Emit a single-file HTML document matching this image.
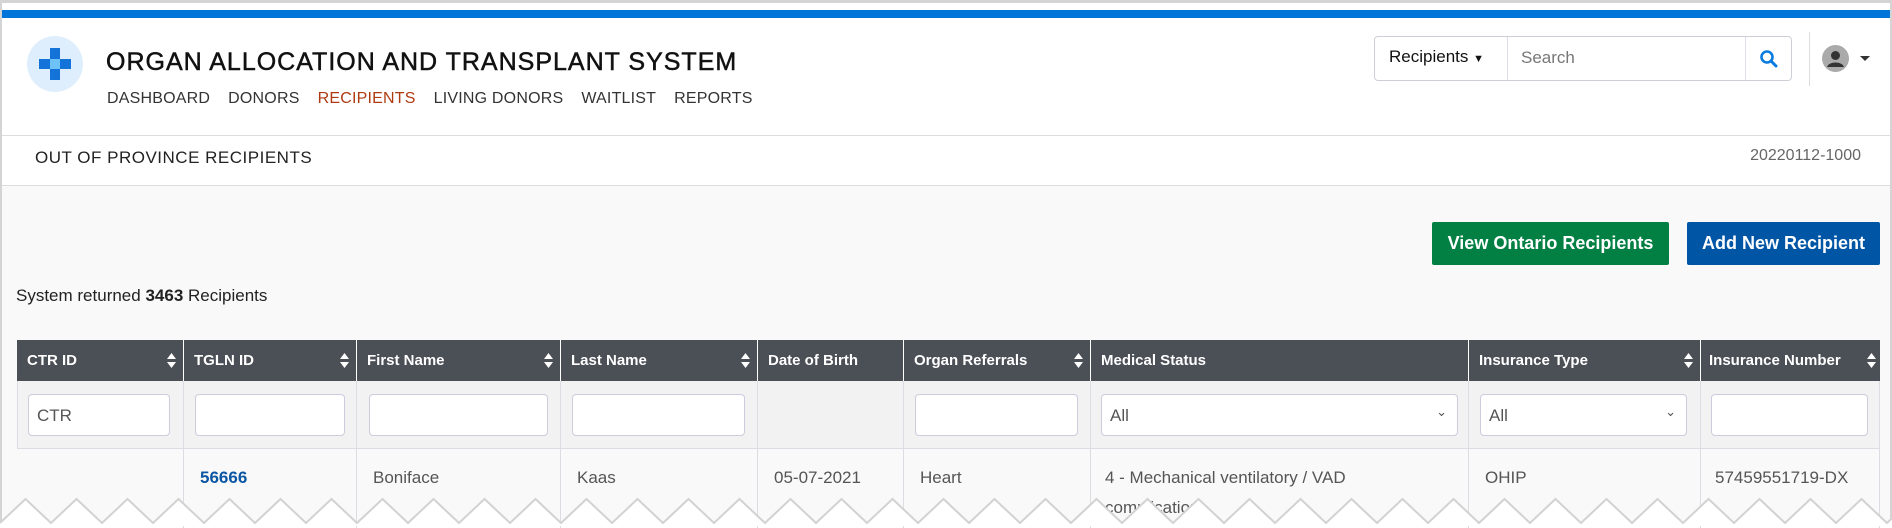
<!DOCTYPE html>
<html><head><meta charset="utf-8"><style>
*{box-sizing:border-box;margin:0;padding:0}
body{width:1892px;height:526px;overflow:hidden;background:#fff;font-family:"Liberation Sans",sans-serif;position:relative}
.a{position:absolute}
.frame{left:0;top:0;width:1892px;height:526px;border:2px solid #d4d4d4;border-top-width:3px;border-bottom:0}
.nav span{margin-right:18px}
.inp{position:absolute;top:394px;height:42px;background:#fff;border:1px solid #ccd;border-radius:4px;font-size:17px;color:#555;padding:11px 8px}
.hd{position:absolute;top:340px;height:41px;color:#fff;font-weight:bold;font-size:15px;line-height:41px;padding-left:10px;border-left:1px solid #fff}
.sort{position:absolute;right:7px;top:13px;width:9px;height:15px}
.cell{position:absolute;top:448px;height:80px;border-left:1px solid #dcdde3;font-size:17px;color:#555;padding:15px 0 0 16px;line-height:30px}
.fc{position:absolute;top:381px;height:67px;border-left:1px solid #dcdde3;background:#f2f2f2}
</style></head><body>
<div class="a" style="left:0;top:0;width:1892px;height:185px;background:#fff"></div>
<div class="a" style="left:0;top:185px;width:1892px;height:341px;background:#f9f9f9"></div>
<div class="a" style="left:0;top:10px;width:1892px;height:8px;background:#0075d9"></div>
<div class="a" style="left:27px;top:36px;width:56px;height:56px;border-radius:50%;background:#dfeefc"></div>
<svg class="a" style="left:36px;top:45px" width="38" height="38" viewBox="0 0 38 38"><rect x="14" y="3" width="10" height="32" fill="#1373d8"/><rect x="3" y="14" width="32" height="10" fill="#1373d8"/><rect x="14" y="14" width="10" height="10" fill="#6dc3f7"/></svg>
<div class="a" style="left:106px;top:48px;font-size:25px;letter-spacing:1px;color:#111;-webkit-text-stroke:0.5px #111">ORGAN ALLOCATION AND TRANSPLANT SYSTEM</div>
<div class="a nav" style="left:107px;top:90px;font-size:16px;color:#333;letter-spacing:0.2px;white-space:nowrap"><span>DASHBOARD</span><span>DONORS</span><span style="color:#b03a10">RECIPIENTS</span><span>LIVING DONORS</span><span>WAITLIST</span><span>REPORTS</span></div>
<div class="a" style="left:1374px;top:36px;width:418px;height:45px;border:1px solid #ccd0d6;border-radius:4px;background:#fff"></div>
<div class="a" style="left:1507px;top:37px;width:1px;height:43px;background:#dde"></div>
<div class="a" style="left:1745px;top:37px;width:1px;height:43px;background:#dde"></div>
<div class="a" style="left:1389px;top:47px;font-size:17px;color:#111">Recipients <span style="font-size:11px">▼</span></div>
<div class="a" style="left:1521px;top:48px;font-size:17px;color:#777">Search</div>
<svg class="a" style="left:1759px;top:49px" width="20" height="20" viewBox="0 0 20 20"><circle cx="8" cy="8" r="5.5" fill="none" stroke="#0a7be0" stroke-width="2.6"/><line x1="12" y1="12" x2="17" y2="17" stroke="#0a7be0" stroke-width="3" stroke-linecap="round"/></svg>
<div class="a" style="left:1809px;top:32px;width:1px;height:54px;background:#ddd"></div>
<svg class="a" style="left:1822px;top:45px" width="27" height="27" viewBox="0 0 27 27"><circle cx="13.5" cy="13.5" r="13.5" fill="#aaa"/><circle cx="13.5" cy="10.5" r="4.5" fill="#333"/><path d="M5 22c2-6 15-6 17 0z" fill="#333"/></svg>
<div class="a" style="left:1860px;top:56px;width:0;height:0;border-left:5px solid transparent;border-right:5px solid transparent;border-top:5px solid #333"></div>
<div class="a" style="left:0;top:135px;width:1892px;height:1px;background:#ddd"></div>
<div class="a" style="left:0;top:185px;width:1892px;height:1px;background:#ddd"></div>
<div class="a" style="left:35px;top:148px;font-size:17px;color:#222;letter-spacing:0.5px">OUT OF PROVINCE RECIPIENTS</div>
<div class="a" style="right:31px;top:147px;font-size:16px;color:#666">20220112-1000</div>
<div class="a" style="left:1432px;top:222px;width:237px;height:43px;background:#028043;border-radius:2px;color:#fff;font-size:18px;font-weight:bold;line-height:43px;text-align:center">View Ontario Recipients</div>
<div class="a" style="left:1687px;top:222px;width:193px;height:43px;background:#0055a5;border-radius:2px;color:#fff;font-size:18px;font-weight:bold;line-height:43px;text-align:center">Add New Recipient</div>
<div class="a" style="left:16px;top:286px;font-size:17px;color:#222">System returned <b>3463</b> Recipients</div>
<div class="a" style="left:17px;top:340px;width:1863px;height:41px;background:#4b4f56"></div>
<div class="hd" style="left:17px;width:166px;border-left:0">CTR ID<svg class="sort" viewBox="0 0 9 15"><path d="M0 6L4.5 0L9 6zM0 9L4.5 15L9 9z" fill="#fff"/></svg></div>
<div class="hd" style="left:183px;width:173px">TGLN ID<svg class="sort" viewBox="0 0 9 15"><path d="M0 6L4.5 0L9 6zM0 9L4.5 15L9 9z" fill="#fff"/></svg></div>
<div class="hd" style="left:356px;width:204px">First Name<svg class="sort" viewBox="0 0 9 15"><path d="M0 6L4.5 0L9 6zM0 9L4.5 15L9 9z" fill="#fff"/></svg></div>
<div class="hd" style="left:560px;width:197px">Last Name<svg class="sort" viewBox="0 0 9 15"><path d="M0 6L4.5 0L9 6zM0 9L4.5 15L9 9z" fill="#fff"/></svg></div>
<div class="hd" style="left:757px;width:146px">Date of Birth</div>
<div class="hd" style="left:903px;width:187px">Organ Referrals<svg class="sort" viewBox="0 0 9 15"><path d="M0 6L4.5 0L9 6zM0 9L4.5 15L9 9z" fill="#fff"/></svg></div>
<div class="hd" style="left:1090px;width:378px">Medical Status</div>
<div class="hd" style="left:1468px;width:232px">Insurance Type<svg class="sort" viewBox="0 0 9 15"><path d="M0 6L4.5 0L9 6zM0 9L4.5 15L9 9z" fill="#fff"/></svg></div>
<div class="hd" style="left:1700px;width:180px;padding-left:8px">Insurance Number<svg class="sort" style="right:4px" viewBox="0 0 9 15"><path d="M0 6L4.5 0L9 6zM0 9L4.5 15L9 9z" fill="#fff"/></svg></div>
<div class="fc" style="left:17px;width:166px"></div><div class="fc" style="left:183px;width:173px"></div><div class="fc" style="left:356px;width:204px"></div><div class="fc" style="left:560px;width:197px"></div><div class="fc" style="left:757px;width:146px"></div><div class="fc" style="left:903px;width:187px"></div><div class="fc" style="left:1090px;width:378px"></div><div class="fc" style="left:1468px;width:232px"></div><div class="fc" style="left:1700px;width:180px;border-right:1px solid #dcdde3"></div>
<div class="a" style="left:17px;top:448px;width:1863px;height:1px;background:#dcdde3"></div>
<div class="inp" style="left:28px;width:142px">CTR</div>
<div class="inp" style="left:195px;width:150px"></div>
<div class="inp" style="left:369px;width:179px"></div>
<div class="inp" style="left:572px;width:173px"></div>
<div class="inp" style="left:915px;width:163px"></div>
<div class="inp" style="left:1101px;width:357px">All<span style="position:absolute;right:10px;top:9px;font-size:13px">⌄</span></div>
<div class="inp" style="left:1480px;width:207px">All<span style="position:absolute;right:10px;top:9px;font-size:13px">⌄</span></div>
<div class="inp" style="left:1711px;width:157px"></div>
<div class="cell" style="left:17px;width:166px;border-left:0"></div>
<div class="cell" style="left:183px;width:173px;color:#0b56a3;font-weight:bold">56666</div>
<div class="cell" style="left:356px;width:204px">Boniface</div>
<div class="cell" style="left:560px;width:197px">Kaas</div>
<div class="cell" style="left:757px;width:146px">05-07-2021</div>
<div class="cell" style="left:903px;width:187px">Heart</div>
<div class="cell" style="left:1090px;width:378px;padding-left:14px">4 - Mechanical ventilatory / VAD<br>complication</div>
<div class="cell" style="left:1468px;width:232px">OHIP</div>
<div class="cell" style="left:1700px;width:180px;border-right:1px solid #dcdde3;padding-left:14px">57459551719-DX</div>
<div class="a frame"></div>
<svg class="a" style="left:0;top:495px" width="1892" height="31" viewBox="0 0 1892 31">
<path id="zf" d="" fill="#fff"/>
<path id="zs" d="" fill="none" stroke="#d2d2d2" stroke-width="2"/>
<script>
var d="M0 28";for(var x=0;x<1900;x+=51){d+=" L"+(x+25.5)+" 4 L"+(x+51)+" 28";}
document.getElementById('zs').setAttribute('d',d);
document.getElementById('zf').setAttribute('d',d+" L1950 40 L0 40Z");
</script>
</svg>
</body></html>
